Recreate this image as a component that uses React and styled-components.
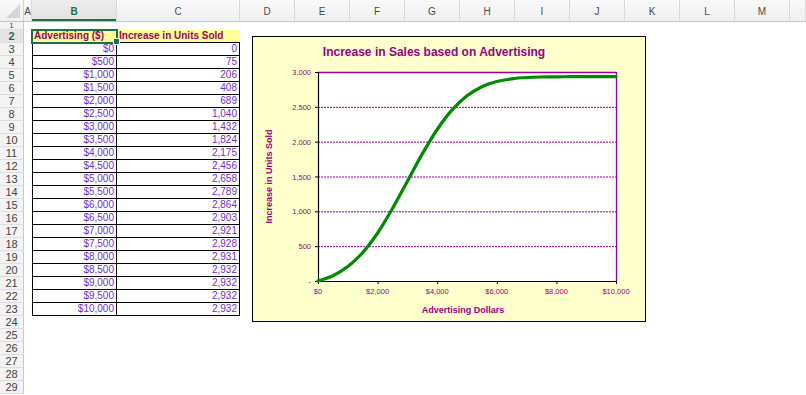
import styled, { createGlobalStyle } from "styled-components";

const colLetters = ['D', 'E', 'F', 'G', 'H', 'I', 'J', 'K', 'L', 'M', ''];
const advertising = [0, 500, 1000, 1500, 2000, 2500, 3000, 3500, 4000, 4500, 5000, 5500, 6000, 6500, 7000, 7500, 8000, 8500, 9000, 9500, 10000];
const units = [0, 75, 206, 408, 689, 1040, 1432, 1824, 2175, 2456, 2658, 2789, 2864, 2903, 2921, 2928, 2931, 2932, 2932, 2932, 2932];

const GRID_COLS = '24px 8px 85px 123px repeat(10, 55px) 1fr';

const fmt = n => n.toLocaleString('en-US');

// plot area in svg coords
const PX0 = 65, PX1 = 363, PY0 = 214, PY1 = 5;
const sx = v => PX0 + (v / 10000) * (PX1 - PX0);
const sy = v => PY0 - (v / 3000) * (PY0 - PY1);

function curvePath() {
    const pts = advertising.map((a, i) => [sx(a), sy(units[i])]);
    let d = `M${pts[0][0]},${pts[0][1]}`;
    for (let i = 0; i < pts.length - 1; i++) {
        const p0 = pts[i - 1] || pts[i];
        const p1 = pts[i];
        const p2 = pts[i + 1];
        const p3 = pts[i + 2] || p2;
        const c1 = [p1[0] + (p2[0] - p0[0]) / 6, p1[1] + (p2[1] - p0[1]) / 6];
        const c2 = [p2[0] - (p3[0] - p1[0]) / 6, p2[1] - (p3[1] - p1[1]) / 6];
        d += ` C${c1[0].toFixed(1)},${c1[1].toFixed(1)} ${c2[0].toFixed(1)},${c2[1].toFixed(1)} ${p2[0].toFixed(1)},${p2[1].toFixed(1)}`;
    }
    return d;
}

export default function App() {
    return (
        <>
            <GlobalStyle />
            <Sheet>
                <HeaderRow>
                    <Corner><CornerMark /></Corner>
                    <ColHead>A</ColHead>
                    <ColHead selected>B</ColHead>
                    <ColHead>C</ColHead>
                    {colLetters.map((c, i) => <ColHead key={i}>{c}</ColHead>)}
                </HeaderRow>

                <Row short>
                    <RowHead short>1</RowHead>
                </Row>

                <Row>
                    <RowHead selected>2</RowHead>
                    <div />
                    <TitleCell selected>Advertising ($)<Handle /></TitleCell>
                    <TitleCell>Increase in Units Sold</TitleCell>
                </Row>

                {advertising.map((a, i) => (
                    <Row key={a}>
                        <RowHead>{i + 3}</RowHead>
                        <div />
                        <DataCell left>${fmt(a)}</DataCell>
                        <DataCell>{fmt(units[i])}</DataCell>
                    </Row>
                ))}

                {[24, 25, 26, 27, 28, 29].map(n => (
                    <Row key={n}>
                        <RowHead>{n}</RowHead>
                    </Row>
                ))}

                <Chart>
                    <ChartTitle>Increase in Sales based on Advertising</ChartTitle>
                    <PlotSvg width="392" height="254" viewBox="0 0 392 254">
                        <rect x={PX0} y={PY1} width={PX1 - PX0} height={PY0 - PY1} fill="#fff" />
                        {[500, 1000, 1500, 2000, 2500].map(v => (
                            <line key={v} x1={PX0} x2={PX1} y1={sy(v) + 0.5} y2={sy(v) + 0.5}
                                stroke="#990099" strokeWidth="1" strokeDasharray="2 1" />
                        ))}
                        <line x1={PX0} x2={PX1} y1={PY1 + 0.5} y2={PY1 + 0.5} stroke="#990099" strokeWidth="1.3" />
                        <line x1={PX1 + 0.5} x2={PX1 + 0.5} y1={PY1} y2={PY0} stroke="#990099" strokeWidth="1.3" />
                        <line x1={PX0 + 0.5} x2={PX0 + 0.5} y1={PY1} y2={PY0 + 1} stroke="#000" strokeWidth="1.2" />
                        <line x1={PX0} x2={PX1 + 1} y1={PY0 + 0.5} y2={PY0 + 0.5} stroke="#000" strokeWidth="1.2" />
                        {[0, 500, 1000, 1500, 2000, 2500, 3000].map(v => (
                            <g key={v}>
                                <line x1={PX0 - 3} x2={PX0} y1={sy(v) + 0.5} y2={sy(v) + 0.5} stroke="#000" />
                                <TickText x={PX0 - 7} y={sy(v) + 3} textAnchor="end">{v === 0 ? '-' : fmt(v)}</TickText>
                            </g>
                        ))}
                        {[0, 2000, 4000, 6000, 8000, 10000].map(v => (
                            <g key={v}>
                                <line x1={sx(v) + 0.5} x2={sx(v) + 0.5} y1={PY0} y2={PY0 + 3} stroke="#000" />
                                <TickText x={sx(v)} y="227" textAnchor="middle">${fmt(v)}</TickText>
                            </g>
                        ))}
                        <path d={curvePath()} fill="none" stroke="#008a00" strokeWidth="3.2" strokeLinecap="round" />
                        <AxisTitle x={(PX0 + PX1) / 2 - 4} y="246" textAnchor="middle">Advertising Dollars</AxisTitle>
                        <AxisTitle transform={`translate(19 ${(PY0 + PY1) / 2}) rotate(-90)`} textAnchor="middle" fontSize="9.5">
                            Increase in Units Sold
                        </AxisTitle>
                    </PlotSvg>
                </Chart>
            </Sheet>
        </>
    );
}

const GlobalStyle = createGlobalStyle`
    html, body {
        margin: 0;
        padding: 0;
        background: #ffffff;
    }
    body {
        font-family: 'Liberation Sans', Arial, sans-serif;
        overflow: hidden;
    }
`;

const Sheet = styled.div`
    position: relative;
    width: 806px;
    height: 395px;
    background: #fff;
`;

const HeaderRow = styled.div`
    display: grid;
    grid-template-columns: ${GRID_COLS};
    height: 22px;
    background: linear-gradient(#f9f9f9, #efefef);
    border-bottom: 1px solid #c4c4c4;
    box-sizing: border-box;
`;

const Corner = styled.div`
    position: relative;
    border-right: 1px solid #d2d2d2;
`;

const CornerMark = styled.div`
    position: absolute;
    right: 3px;
    bottom: 3px;
    width: 0;
    height: 0;
    border-left: 14px solid transparent;
    border-bottom: 14px solid #d6d6d6;
`;

const ColHead = styled.div`
    display: flex;
    align-items: center;
    justify-content: center;
    font-family: 'Liberation Sans', Arial, sans-serif;
    font-size: 10px;
    color: ${p => (p.selected ? '#1d7044' : '#4a4a4a')};
    font-weight: ${p => (p.selected ? 'bold' : 'normal')};
    background: ${p => (p.selected ? 'linear-gradient(#ececec, #e2e2e2)' : 'transparent')};
    border-right: 1px solid #dadada;
    box-shadow: ${p => (p.selected ? 'inset 0 -2px 0 #1d7044' : 'none')};
    padding-top: 1px;
    box-sizing: border-box;
    overflow: hidden;
`;

const Row = styled.div`
    display: grid;
    grid-template-columns: ${GRID_COLS};
    height: ${p => (p.short ? '8px' : '13px')};
`;

const RowHead = styled.div`
    display: flex;
    align-items: ${p => (p.short ? 'flex-start' : 'center')};
    justify-content: center;
    font-family: 'Liberation Sans', Arial, sans-serif;
    font-size: ${p => (p.short ? '8px' : '11px')};
    line-height: ${p => (p.short ? '7px' : '1')};
    overflow: hidden;
    color: ${p => (p.selected ? '#1d7044' : '#444')};
    font-weight: ${p => (p.selected ? 'bold' : 'normal')};
    background: ${p => (p.selected ? '#e4e4e4' : '#f3f3f3')};
    border-right: 1px solid #c8c8c8;
    border-bottom: 1px solid #dedede;
    box-sizing: border-box;
`;

const TitleCell = styled.div`
    position: relative;
    background: #ffff99;
    font-size: 10px;
    font-weight: bold;
    color: #a5005f;
    line-height: 12px;
    padding-left: 2px;
    white-space: nowrap;
    border-bottom: 1px solid #000;
    box-sizing: border-box;
    outline: ${p => (p.selected ? '2px solid #1d7044' : 'none')};
    outline-offset: -1px;
    z-index: ${p => (p.selected ? 2 : 1)};
`;

const Handle = styled.div`
    position: absolute;
    right: -3px;
    bottom: -3px;
    width: 5px;
    height: 5px;
    background: #1d7044;
    border: 1px solid #fff;
`;

const DataCell = styled.div`
    font-size: 10px;
    line-height: 12px;
    color: #7030c8;
    text-align: right;
    padding-right: 2px;
    border-right: 1px solid #000;
    border-bottom: 1px solid #000;
    border-left: ${p => (p.left ? '1px solid #000' : 'none')};
    box-sizing: border-box;
    white-space: nowrap;
`;

const Chart = styled.div`
    position: absolute;
    left: 252px;
    top: 36px;
    width: 394px;
    height: 286px;
    background: #ffffcc;
    border: 1px solid #000;
    box-sizing: border-box;
    display: flex;
    flex-direction: column;
    z-index: 3;
`;

const ChartTitle = styled.div`
    height: 30px;
    line-height: 31px;
    text-align: center;
    font-family: 'Liberation Sans', Arial, sans-serif;
    font-size: 12px;
    font-weight: bold;
    color: #990080;
    padding-right: 30px;
`;

const PlotSvg = styled.svg`
    display: block;
    overflow: visible;
`;

const TickText = styled.text`
    font-family: 'Liberation Sans', Arial, sans-serif;
    font-size: 7.5px;
    fill: #990080;
`;

const AxisTitle = styled.text`
    font-family: 'Liberation Sans', Arial, sans-serif;
    font-size: 9px;
    font-weight: bold;
    fill: #990080;
`;
